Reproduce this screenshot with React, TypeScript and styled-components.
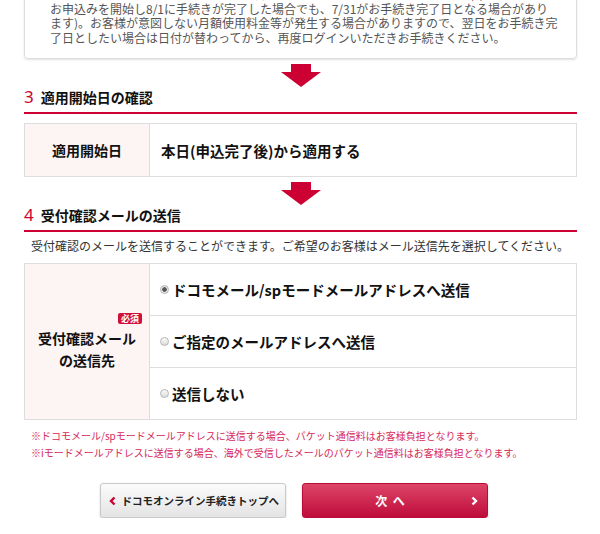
import React from 'react';
import styled, { createGlobalStyle } from 'styled-components';

const RED = '#cc0033';
const BORDER = '#dddddd';

const GlobalStyle = createGlobalStyle`
  html, body {
    margin: 0;
    padding: 0;
    background: #fff;
  }
  body {
    font-family: 'Noto Sans CJK JP', 'Noto Sans', sans-serif;
    color: #222;
    overflow: hidden;
  }
`;

const Page = styled.div`
  width: 553px;
  padding: 0 23px 0 24px;
`;

const NoticeBox = styled.div`
  margin-top: -24px;
  display: flex;
  align-items: flex-start;
  gap: 2px;
  border: 1px solid ${BORDER};
  border-radius: 4px;
  box-shadow: 0 1px 2px rgba(0, 0, 0, 0.12);
  padding: 10px 12px 13px 15px;
`;

const Bullet = styled.span`
  flex: none;
  width: 8px;
  height: 8px;
  margin-top: 3px;
  border-radius: 50%;
  background: ${RED};
`;

const NoticeText = styled.p`
  margin: 0;
  font-size: 12px;
  line-height: 14.5px;
  color: #555;
  white-space: nowrap;
`;

const ArrowWrap = styled.div`
  display: flex;
  justify-content: center;
  margin-top: 5px;
  height: 23px;
`;

const SectionHeading = styled.h2`
  display: flex;
  align-items: center;
  gap: 7px;
  margin: 1px 0 0;
  padding-bottom: 6px;
  border-bottom: 2px solid ${RED};
  line-height: 18px;
`;

const StepNum = styled.span`
  font-family: 'Noto Sans', sans-serif;
  font-size: 17px;
  font-weight: 400;
  color: ${RED};
`;

const StepTitle = styled.span`
  font-size: 14px;
  font-weight: 700;
  color: #111;
`;

const Table = styled.div<{ $top: number }>`
  display: grid;
  grid-template-columns: 125px 1fr;
  margin-top: ${(p) => p.$top}px;
  border: 1px solid ${BORDER};
`;

const LabelCell = styled.div<{ $rows?: number }>`
  grid-row: span ${(p) => p.$rows ?? 1};
  display: flex;
  flex-direction: column;
  align-items: center;
  justify-content: center;
  background: #fdf5f3;
  border-right: 1px solid ${BORDER};
  font-size: 14px;
  font-weight: 700;
  line-height: 22px;
  text-align: center;
  color: #111;
`;

const Badge = styled.span`
  align-self: flex-end;
  margin: 0 7px 3px 0;
  padding: 0 3px;
  height: 11px;
  line-height: 11px;
  border-radius: 2px;
  background: #d0103a;
  color: #fff;
  font-size: 9px;
  font-weight: 700;
`;

const ValueCell = styled.div`
  display: flex;
  align-items: center;
  min-height: 52px;
  padding-left: 11px;
  font-size: 14.5px;
  font-weight: 700;
  color: #111;
`;

const OptionRow = styled.label`
  display: flex;
  align-items: center;
  gap: 3px;
  height: 51px;
  padding-left: 10px;
  font-size: 14.5px;
  font-weight: 700;
  color: #111;
  & + & {
    border-top: 1px solid ${BORDER};
  }
`;

const RadioMark = styled.span<{ $checked?: boolean }>`
  flex: none;
  width: 9px;
  height: 9px;
  border-radius: 50%;
  border: 1px solid #b5b5b5;
  box-sizing: border-box;
  background: ${(p) =>
    p.$checked
      ? 'radial-gradient(circle, #555 0 2px, #e8e8e8 2.5px)'
      : 'linear-gradient(#fafafa, #dcdcdc)'};
`;

const Description = styled.p`
  margin: 6px 0 0;
  padding-left: 7px;
  font-size: 12px;
  line-height: 16px;
  color: #333;
`;

const Notes = styled.div`
  margin-top: 7px;
  padding-left: 7px;
  font-size: 10px;
  line-height: 17px;
  color: #d6285a;
  white-space: nowrap;
`;

const ButtonRow = styled.div`
  display: flex;
  justify-content: center;
  gap: 16px;
  margin-top: 22px;
  padding-right: 14px;
`;

const BaseButton = styled.button`
  width: 186px;
  height: 35px;
  border-radius: 3px;
  font-family: inherit;
  font-weight: 700;
  cursor: pointer;
  box-shadow: 0 1px 2px rgba(0, 0, 0, 0.2);
`;

const BackButton = styled(BaseButton)`
  display: flex;
  align-items: center;
  gap: 6px;
  padding: 0 0 0 8px;
  border: 1px solid #c9c9c9;
  background: linear-gradient(#fbfbfb, #e4e4e4);
  color: #222;
  font-size: 10.5px;
`;

const NextButton = styled(BaseButton)`
  display: grid;
  grid-template-columns: 1fr auto 1fr;
  align-items: center;
  padding: 0 9px 0 0;
  border: 1px solid #b80d38;
  background: linear-gradient(#dd4468, #bf0d3b);
  color: #fff;
  font-size: 12px;
  & > svg {
    justify-self: end;
  }
`;

const NextLabel = styled.span`
  word-spacing: 3px;
  white-space: pre;
`;

const DownArrow = () => (
  <svg width="40" height="23" viewBox="0 0 40 23">
    <rect x="10" y="0" width="20" height="8" fill={RED} />
    <polygon points="0,8 40,8 20,23" fill={RED} />
  </svg>
);

const Chevron = ({ dir, color }: { dir: 'left' | 'right'; color: string }) => (
  <svg width="7" height="10" viewBox="0 0 7 10">
    <polyline
      points={dir === 'left' ? '5.5,1.5 2,5 5.5,8.5' : '1.5,1.5 5,5 1.5,8.5'}
      fill="none"
      stroke={color}
      strokeWidth="2.4"
    />
  </svg>
);

const options = [
  { label: 'ドコモメール/spモードメールアドレスへ送信', checked: true },
  { label: 'ご指定のメールアドレスへ送信', checked: false },
  { label: '送信しない', checked: false },
];

const App = () => {
  return (
    <Page>
      <GlobalStyle />
      <NoticeBox>
        <Bullet />
        <NoticeText>
          当日中にお手続きが完了しなかった場合は、翌日がお手続き完了日となります(7/31に
          <br />
          お申込みを開始し8/1に手続きが完了した場合でも、7/31がお手続き完了日となる場合があり
          <br />
          ます)。お客様が意図しない月額使用料金等が発生する場合がありますので、翌日をお手続き完
          <br />
          了日としたい場合は日付が替わってから、再度ログインいただきお手続きください。
        </NoticeText>
      </NoticeBox>

      <ArrowWrap>
        <DownArrow />
      </ArrowWrap>
      <SectionHeading>
        <StepNum>3</StepNum>
        <StepTitle>適用開始日の確認</StepTitle>
      </SectionHeading>
      <Table $top={9}>
        <LabelCell>適用開始日</LabelCell>
        <ValueCell>本日(申込完了後)から適用する</ValueCell>
      </Table>

      <ArrowWrap>
        <DownArrow />
      </ArrowWrap>
      <SectionHeading>
        <StepNum>4</StepNum>
        <StepTitle>受付確認メールの送信</StepTitle>
      </SectionHeading>
      <Description>
        受付確認のメールを送信することができます。ご希望のお客様はメール送信先を選択してください。
      </Description>
      <Table $top={9}>
        <LabelCell $rows={3}>
          <Badge>必須</Badge>
          <span>
            受付確認メール
            <br />
            の送信先
          </span>
        </LabelCell>
        <div>
          {options.map((o) => (
            <OptionRow key={o.label}>
              <RadioMark $checked={o.checked} />
              {o.label}
            </OptionRow>
          ))}
        </div>
      </Table>
      <Notes>
        ※ドコモメール/spモードメールアドレスに送信する場合、パケット通信料はお客様負担となります。
        <br />
        ※iモードメールアドレスに送信する場合、海外で受信したメールのパケット通信料はお客様負担となります。
      </Notes>

      <ButtonRow>
        <BackButton>
          <Chevron dir="left" color={RED} />
          ドコモオンライン手続きトップへ
        </BackButton>
        <NextButton>
          <span />
          <NextLabel>次 へ</NextLabel>
          <Chevron dir="right" color="#fff" />
        </NextButton>
      </ButtonRow>
    </Page>
  );
};

export default App;
